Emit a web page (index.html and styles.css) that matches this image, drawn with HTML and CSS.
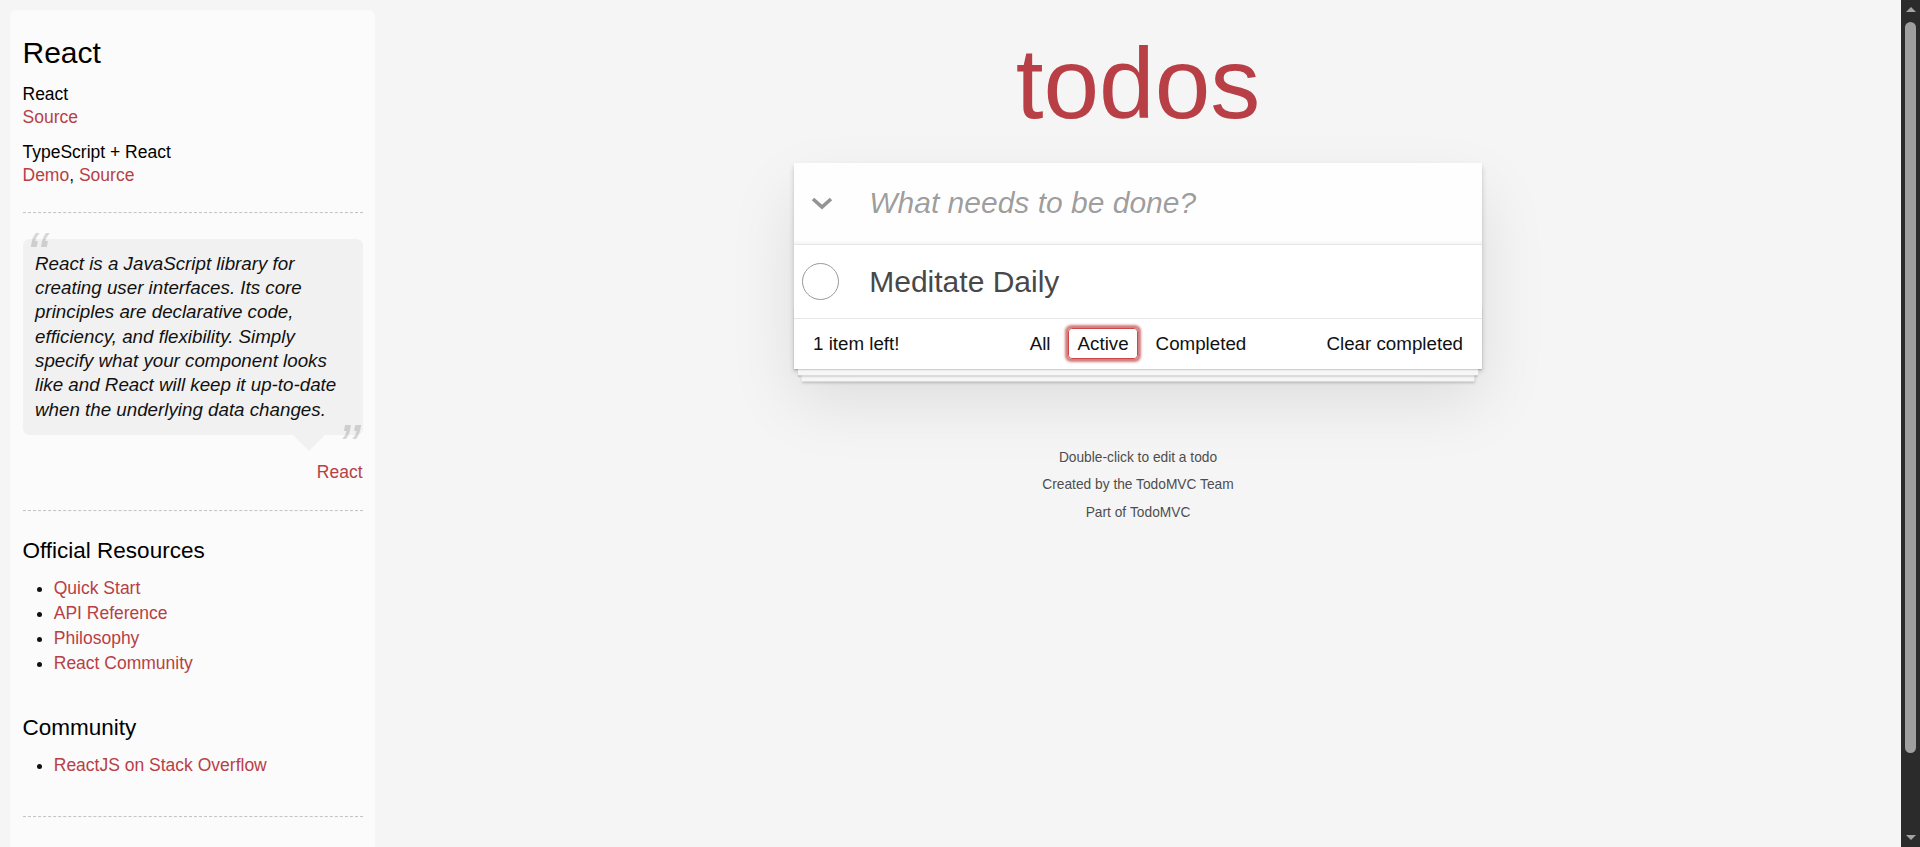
FILE: index.html
```html
<!DOCTYPE html>
<html lang="en">
<head>
<meta charset="utf-8">
<title>React • TodoMVC</title>
<link rel="stylesheet" href="styles.css">
</head>
<body>
<div class="page">
  <aside class="learn">
    <header>
      <h3>React</h3>
      <div class="source-links">
        <h5>React</h5>
        <a href="#">Source</a>
        <h5>TypeScript + React</h5>
        <a href="#">Demo</a>, <a href="#">Source</a>
      </div>
    </header>
    <hr>
    <blockquote class="quote speech-bubble">
      <p>React is a JavaScript library for creating user interfaces. Its core principles are declarative code, efficiency, and flexibility. Simply specify what your component looks like and React will keep it up-to-date when the underlying data changes.</p>
      <footer><a href="#">React</a></footer>
    </blockquote>
    <hr>
    <h4>Official Resources</h4>
    <ul>
      <li><a href="#">Quick Start</a></li>
      <li><a href="#">API Reference</a></li>
      <li><a href="#">Philosophy</a></li>
      <li><a href="#">React Community</a></li>
    </ul>
    <h4>Community</h4>
    <ul>
      <li><a href="#">ReactJS on Stack Overflow</a></li>
    </ul>
    <footer class="learn-footer">
      <hr>
    </footer>
  </aside>

  <main class="main-area">
    <div class="app-col">
      <h1 class="title">todos</h1>
      <section class="todoapp">
        <header class="input-container">
          <label class="toggle-all" for="new-todo">
            <svg width="22" height="13" viewBox="0 0 22 13"><polyline points="2,2 11,10 20,2" fill="none" stroke="#949494" stroke-width="3.6"/></svg>
          </label>
          <input id="new-todo" class="new-todo" type="text" placeholder="What needs to be done?">
        </header>
        <div class="main">
          <ul class="todo-list">
            <li class="todo-item">
              <span class="toggle"></span>
              <label class="todo-label">Meditate Daily</label>
            </li>
          </ul>
        </div>
        <footer class="footer">
          <span class="todo-count">1 item left!</span>
          <ul class="filters"><li><a href="#">All</a></li><li><a href="#" class="selected">Active</a></li><li><a href="#">Completed</a></li></ul>
          <button class="clear-completed">Clear completed</button>
        </footer>
      </section>
      <footer class="info">
        <p>Double-click to edit a todo</p>
        <p>Created by <a href="#">the TodoMVC Team</a></p>
        <p>Part of <a href="#">TodoMVC</a></p>
      </footer>
    </div>
  </main>
</div>

<div class="scrollbar" aria-hidden="true">
  <div class="sb-btn"><span class="sb-arrow-up"></span></div>
  <div class="sb-track"><div class="sb-thumb"></div></div>
  <div class="sb-btn"><span class="sb-arrow-down"></span></div>
</div>
</body>
</html>
```
FILE: styles.css
```css
html, body {
  margin: 0;
  padding: 0;
}

body {
  font-family: "Liberation Sans", Arial, Helvetica, sans-serif;
  font-size: 17.5px;
  line-height: 24.5px;
  background: #f5f5f5;
  color: #111111;
  font-weight: 300;
  overflow-x: hidden;
}

.page {
  display: flex;
  align-items: flex-start;
  padding-right: 19px;
}

/* ---------- fake window scrollbar ---------- */
.scrollbar {
  position: fixed;
  top: 0;
  right: 0;
  bottom: 0;
  width: 19px;
  background: #2b2b2b;
  display: flex;
  flex-direction: column;
  z-index: 1000;
}

.sb-btn {
  flex: 0 0 19px;
  height: 19px;
  display: flex;
  align-items: center;
  justify-content: center;
}

.sb-arrow-up {
  width: 0;
  height: 0;
  border-left: 5px solid transparent;
  border-right: 5px solid transparent;
  border-bottom: 5px solid #a3a3a3;
}

.sb-arrow-down {
  width: 0;
  height: 0;
  border-left: 5px solid transparent;
  border-right: 5px solid transparent;
  border-top: 5px solid #a3a3a3;
}

.sb-track {
  flex: 1 1 auto;
  padding: 3px 4px;
}

.sb-thumb {
  height: 731px;
  border-radius: 6px;
  background: #9f9f9f;
}

/* ---------- learn sidebar ---------- */
.learn {
  flex: 0 0 340px;
  width: 340px;
  margin: 10px 0 0 10px;
  padding: 12.5px 12.5px 60px 12.5px;
  border-radius: 6.25px;
  background-color: rgba(255, 255, 255, 0.6);
}

.learn a {
  font-weight: normal;
  text-decoration: none;
  color: #b83f45;
}

.learn h3,
.learn h4,
.learn h5 {
  margin: 12.5px 0;
  font-weight: 500;
  line-height: 1.2;
  color: #000;
}

.learn h3 {
  font-size: 30px;
}

.learn h4 {
  font-size: 22.5px;
}

.learn h5 {
  margin-bottom: 0;
  font-size: 17.5px;
}

.learn ul {
  padding: 0;
  margin: 0 0 37.5px 31.25px;
}

.learn li {
  line-height: 25px;
}

.learn p {
  font-size: 18.75px;
  font-weight: 300;
  line-height: 1.3;
  margin: 0;
}

.learn hr {
  margin: 25px 0;
  border: 0;
  height: 0;
  border-top: 1px dashed #c5c5c5;
  border-bottom: 1px dashed #f7f7f7;
}

.quote {
  border: none;
  margin: 25px 0 75px 0;
}

.quote p {
  font-style: italic;
}

.quote p::before {
  content: '\201C';
  font-size: 62.5px;
  opacity: 0.15;
  position: absolute;
  top: -25px;
  left: 3.75px;
}

.quote p::after {
  content: '\201D';
  font-size: 62.5px;
  opacity: 0.15;
  position: absolute;
  bottom: -52.5px;
  right: 3.75px;
}

.quote footer {
  position: absolute;
  bottom: -50px;
  right: 0;
}

.quote footer a {
  margin-left: 6.25px;
  vertical-align: middle;
}

.speech-bubble {
  position: relative;
  padding: 12.5px;
  background: rgba(0, 0, 0, 0.04);
  border-radius: 6.25px;
}

.speech-bubble::after {
  content: '';
  position: absolute;
  top: 100%;
  right: 37.5px;
  border: 16.25px solid transparent;
  border-top-color: rgba(0, 0, 0, 0.04);
}

/* ---------- main column ---------- */
.main-area {
  flex: 1 1 auto;
  display: flex;
  justify-content: center;
  min-width: 0;
}

.app-col {
  width: 687.5px;
  flex: 0 0 687.5px;
}

.title {
  margin: 0;
  padding-top: 33px;
  font-size: 100px;
  line-height: 100px;
  font-weight: 200;
  text-align: center;
  color: #b83f45;
  text-rendering: optimizeLegibility;
}

.todoapp {
  background: #fff;
  margin: 29.5px 0 50px 0;
  position: relative;
  box-shadow: 0 2.5px 5px 0 rgba(0, 0, 0, 0.2),
              0 31.25px 62.5px 0 rgba(0, 0, 0, 0.1);
}

.input-container {
  position: relative;
}

.toggle-all {
  position: absolute;
  top: 0;
  left: 0;
  width: 56.25px;
  height: 81.25px;
  display: flex;
  align-items: center;
  justify-content: center;
}

.toggle-all svg {
  display: block;
  margin-top: 1px;
}

.new-todo {
  display: block;
  width: 100%;
  box-sizing: border-box;
  height: 81.25px;
  margin: 0;
  padding: 20px 20px 20px 75px;
  border: none;
  outline: none;
  font-family: inherit;
  font-size: 30px;
  line-height: 42px;
  font-weight: 300;
  color: inherit;
  background: rgba(0, 0, 0, 0.003);
  box-shadow: inset 0 -2.5px 1.25px rgba(0, 0, 0, 0.03);
}

.new-todo::placeholder {
  font-style: italic;
  font-weight: 400;
  color: rgba(0, 0, 0, 0.4);
}

.main {
  position: relative;
  z-index: 2;
  border-top: 1px solid #e6e6e6;
}

.todo-list {
  margin: 0;
  padding: 0;
  list-style: none;
}

.todo-item {
  display: flex;
  align-items: center;
  font-size: 30px;
  border-bottom: 1px solid #ededed;
}

.todo-item:last-child {
  border-bottom: none;
}

.toggle {
  flex: 0 0 37px;
  width: 37px;
  height: 37px;
  box-sizing: border-box;
  margin: 0 30px 0 8px;
  border: 1px solid #9a9a9a;
  border-radius: 50%;
}

.todo-label {
  display: block;
  padding: 18.75px 18.75px 18.75px 0;
  line-height: 1.2;
  font-weight: 400;
  color: #484848;
  word-break: break-all;
}

.footer {
  position: relative;
  display: grid;
  grid-template-columns: 1fr auto 1fr;
  align-items: start;
  padding: 12.5px 18.75px;
  height: 25px;
  font-size: 18.75px;
  text-align: center;
  border-top: 1px solid #e6e6e6;
}

.footer::before {
  content: '';
  position: absolute;
  right: 0;
  bottom: 0;
  left: 0;
  height: 62.5px;
  overflow: hidden;
  box-shadow: 0 1.25px 1.25px rgba(0, 0, 0, 0.2),
              0 10px 0 -3.75px #f6f6f6,
              0 11.25px 1.25px -3.75px rgba(0, 0, 0, 0.2),
              0 20px 0 -7.5px #f6f6f6,
              0 21.25px 2.5px -7.5px rgba(0, 0, 0, 0.2);
}

.todo-count {
  position: relative;
  justify-self: start;
  text-align: left;
}

.filters {
  position: relative;
  margin: 0;
  padding: 0;
  list-style: none;
}

.filters li {
  display: inline;
}

.filters li a {
  color: inherit;
  margin: 3.75px;
  padding: 3.75px 8.75px;
  text-decoration: none;
  border: 1px solid transparent;
  border-radius: 3.75px;
}

.filters li a.selected {
  border-color: #ce4646;
  box-shadow: 0 0 2.5px 2.5px #cf7d7d;
}

.clear-completed {
  position: relative;
  justify-self: end;
  margin: 0;
  padding: 0;
  border: 0;
  background: none;
  font-family: inherit;
  font-size: 18.75px;
  font-weight: 300;
  line-height: 23.75px;
  color: inherit;
  cursor: pointer;
}

.info {
  margin: 81.25px auto 0;
  color: #4d4d4d;
  font-size: 13.75px;
  text-shadow: 0 1px 0 rgba(255, 255, 255, 0.5);
  text-align: center;
}

.info p {
  line-height: 1;
  margin: 13.75px 0;
}

.info a {
  color: inherit;
  text-decoration: none;
  font-weight: 400;
}
```
